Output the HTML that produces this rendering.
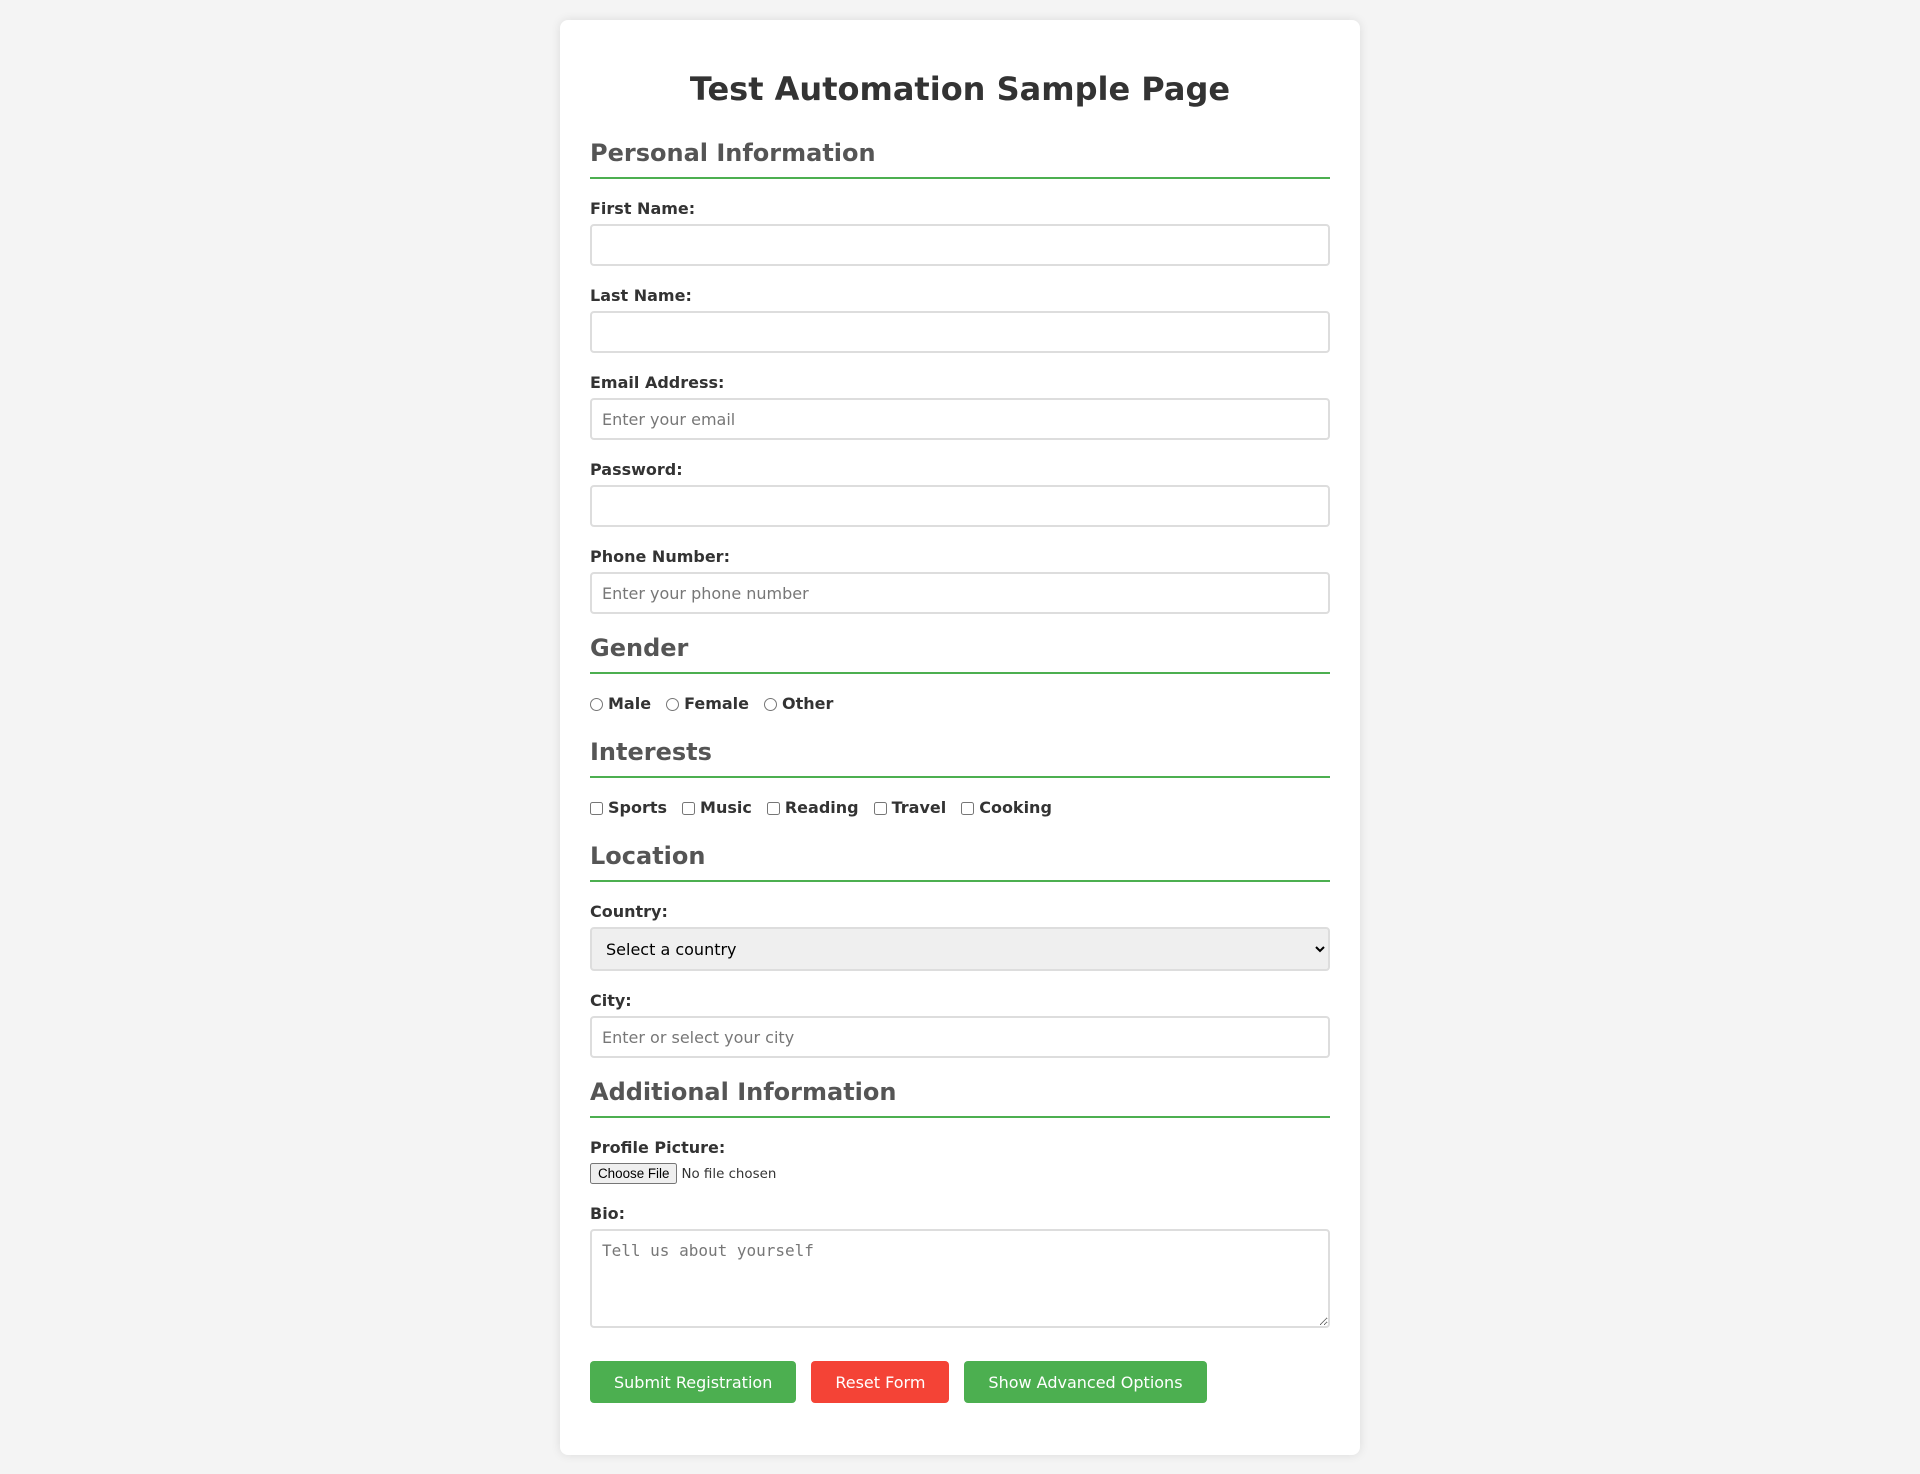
<!DOCTYPE html>
<html><head><meta charset="utf-8">
<style>
*{box-sizing:border-box}
body{margin:0;background:#f4f4f4;font-family:"DejaVu Sans","Liberation Sans",sans-serif;color:#333}
.c{width:800px;margin:20px auto 0;background:#fff;border-radius:8px;box-shadow:0 0 10px rgba(0,0,0,0.1);padding:30px;height:1435px}
h1{font-size:32px;text-align:center;margin:20px 0 31px;line-height:38px;color:#333}
h2{font-size:24px;color:#555;margin:0 0 20px;line-height:28px;padding-bottom:10px;border-bottom:2px solid #4CAF50}
.g{margin-bottom:20px}
label.l{display:block;font-weight:bold;font-size:16px;line-height:19px;margin-bottom:6px}
.in{display:block;width:100%;height:42px;padding:10px;border:2px solid #ddd;border-radius:4px;font-size:16px;font-family:inherit;color:#333}
.in::placeholder{color:#777}
select.in{height:44px;background:#efefef;color:#000;padding:0 10px}
textarea.in{height:99px;font-family:"DejaVu Sans Mono",monospace;resize:vertical}
.row{font-weight:bold;font-size:16px;line-height:19px;margin:1px 0 25px}
.row label{margin-right:15px}
.row input{margin:3px 5px 0 0;vertical-align:-2px}
input[type=file]{font-family:"DejaVu Sans",sans-serif;font-size:13.4px}
.btns{margin-top:33px}
.b{display:inline-block;height:42px;padding:0 24px;border:0;border-radius:4px;color:#fff;font-size:16px;font-family:inherit;margin-right:15px;background:#4CAF50}
.r{background:#f44336}
</style></head><body>
<div class="c">
<h1>Test Automation Sample Page</h1>
<h2>Personal Information</h2>
<div class="g"><label class="l">First Name:</label><input class="in"></div>
<div class="g"><label class="l">Last Name:</label><input class="in"></div>
<div class="g"><label class="l">Email Address:</label><input class="in" placeholder="Enter your email"></div>
<div class="g"><label class="l">Password:</label><input class="in" type="password"></div>
<div class="g"><label class="l">Phone Number:</label><input class="in" placeholder="Enter your phone number"></div>
<h2>Gender</h2>
<div class="row"><label><input type="radio" name="g">Male</label><label><input type="radio" name="g">Female</label><label><input type="radio" name="g">Other</label></div>
<h2>Interests</h2>
<div class="row"><label><input type="checkbox">Sports</label><label><input type="checkbox">Music</label><label><input type="checkbox">Reading</label><label><input type="checkbox">Travel</label><label><input type="checkbox">Cooking</label></div>
<h2>Location</h2>
<div class="g"><label class="l">Country:</label><select class="in"><option>Select a country</option></select></div>
<div class="g"><label class="l">City:</label><input class="in" placeholder="Enter or select your city"></div>
<h2>Additional Information</h2>
<div class="g"><label class="l">Profile Picture:</label><input type="file"></div>
<div class="g" style="margin-bottom:0"><label class="l">Bio:</label><textarea class="in" placeholder="Tell us about yourself"></textarea></div>
<div class="btns"><button class="b">Submit Registration</button><button class="b r">Reset Form</button><button class="b">Show Advanced Options</button></div>
</div>
</body></html>
